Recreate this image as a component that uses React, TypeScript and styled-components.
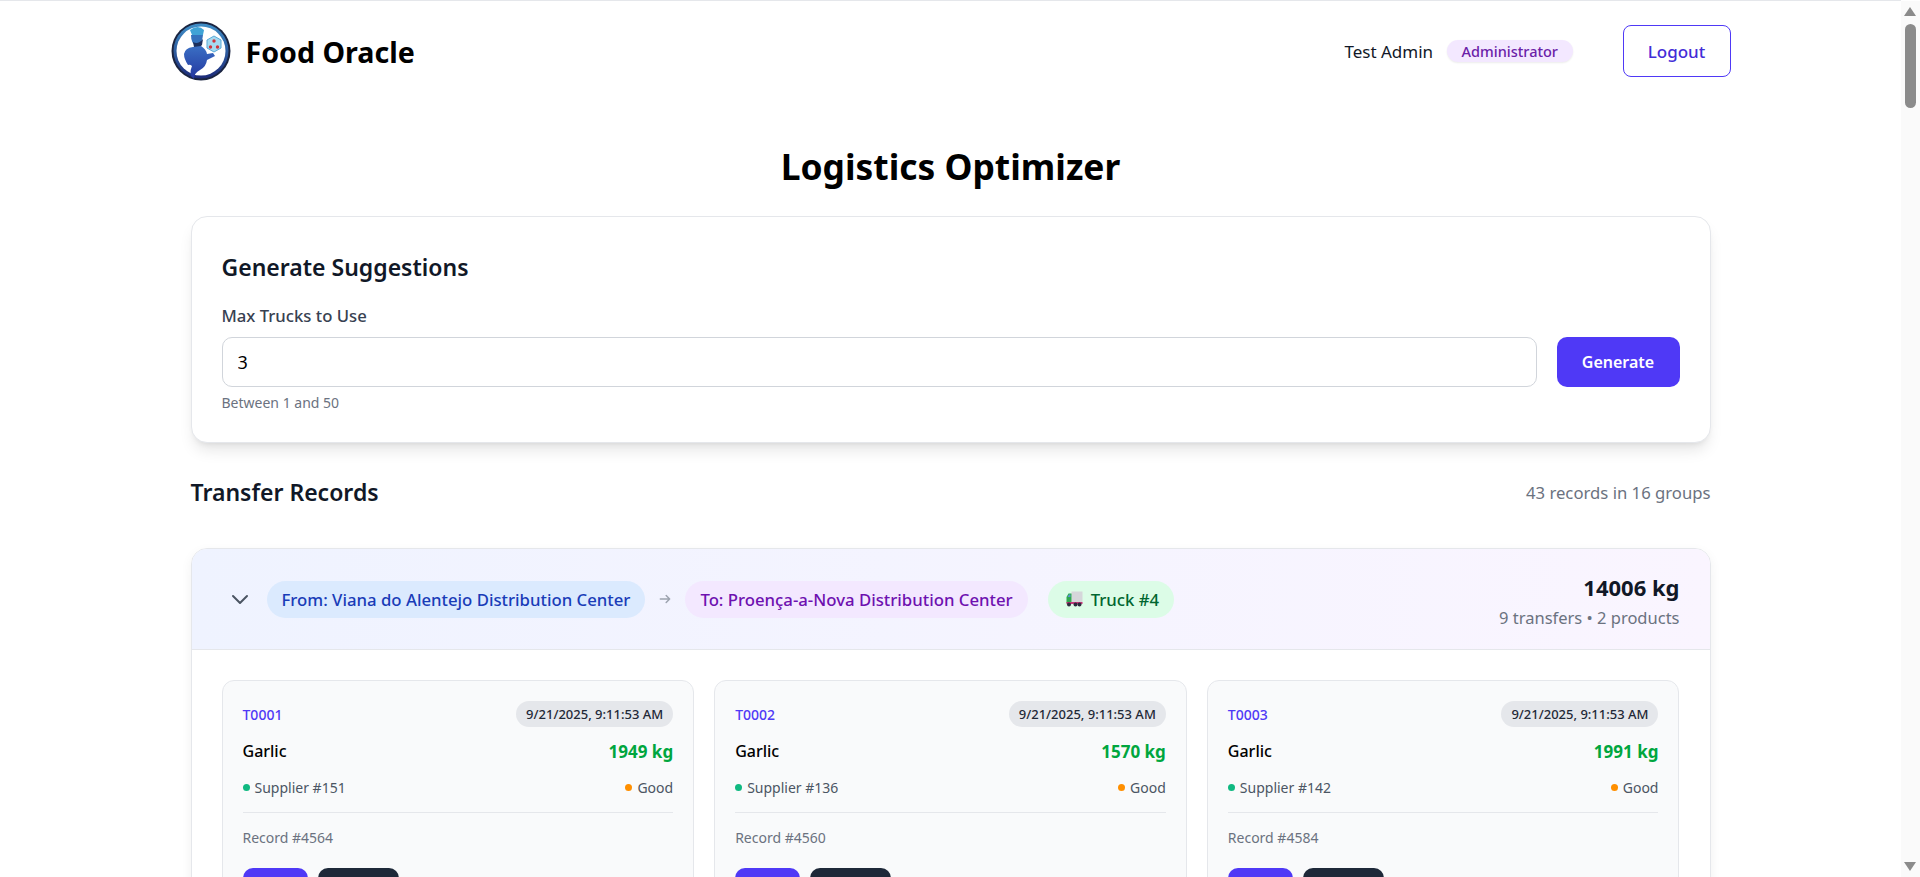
import React from "react";
import styled, { createGlobalStyle } from "styled-components";

const GlobalStyle = createGlobalStyle`
  html, body {
    margin: 0;
    padding: 0;
    background: #fff;
    font-family: "Noto Sans", "Open Sans", sans-serif;
  }
  * { box-sizing: border-box; }
`;

const Page = styled.div`
  width: 1901px;
  border-top: 1px solid #e5e7eb;
  min-height: 1300px;
`;

const ScrollTrack = styled.div`
  position: fixed;
  top: 1px;
  right: 0;
  bottom: 0;
  width: 19px;
  background: #fafafa;
`;

const ScrollThumb = styled.div`
  position: absolute;
  top: 23px;
  left: 4px;
  width: 11px;
  height: 84px;
  border-radius: 6px;
  background: #8b8b8b;
`;

const ScrollArrow = styled.i<{ $down?: boolean }>`
  position: absolute;
  left: 3px;
  ${(p) => (p.$down ? "bottom: 6px;" : "top: 6px;")}
  width: 0;
  height: 0;
  border-left: 6.5px solid transparent;
  border-right: 6.5px solid transparent;
  ${(p) => (p.$down ? "border-top: 9px solid #8b8b8b;" : "border-bottom: 9px solid #8b8b8b;")}
`;

const Navbar = styled.header`
  width: 1600px;
  margin: 0 auto;
  padding: 20px 20px 0;
  height: 103px;
  display: flex;
  justify-content: space-between;
  align-items: flex-start;
`;

const Brand = styled.div`
  display: flex;
  align-items: center;
  gap: 15px;
  height: 60px;
`;

const BrandName = styled.span`
  font-size: 28.6px;
  font-weight: 700;
  color: #000;
`;

const NavRight = styled.div`
  display: flex;
  align-items: center;
  height: 52px;
  margin-top: 4px;
`;

const UserName = styled.span`
  font-size: 17px;
  color: #111827;
  margin-right: 14px;
`;

const RoleBadge = styled.span`
  background: #f3e8ff;
  color: #6b21a8;
  font-size: 14.5px;
  font-weight: 500;
  height: 22px;
  line-height: 22px;
  padding: 0 14.5px;
  border-radius: 11px;
  box-shadow: 0 1px 2px rgba(0, 0, 0, 0.08);
  margin-right: 50px;
`;

const LogoutButton = styled.button`
  width: 108px;
  height: 52px;
  background: #fff;
  border: 1px solid #4f39f6;
  border-radius: 8px;
  color: #432dd7;
  font: 500 17px "Noto Sans", sans-serif;
`;

const Main = styled.main`
  width: 1520px;
  margin: 0 auto;
`;

const PageTitle = styled.h1`
  margin: 31px 0 19px;
  font-size: 35.4px;
  line-height: 62px;
  font-weight: 700;
  color: #000;
  text-align: center;
`;

const Panel = styled.section`
  background: #fff;
  border: 1px solid #e5e7eb;
  border-radius: 16px;
  box-shadow: 0 10px 15px -3px rgba(0, 0, 0, 0.1), 0 4px 6px -4px rgba(0, 0, 0, 0.1);
  padding: 30px;
  height: 227px;
`;

const PanelTitle = styled.h2`
  margin: 0;
  font-size: 23px;
  line-height: 40px;
  font-weight: 600;
  color: #111827;
`;

const FieldLabel = styled.label`
  display: block;
  margin-top: 17px;
  font-size: 16.7px;
  line-height: 24px;
  font-weight: 500;
  color: #374151;
`;

const FieldRow = styled.div`
  display: flex;
  gap: 20px;
  margin-top: 9px;
`;

const NumberInput = styled.input`
  flex: 1;
  height: 50px;
  padding: 0 15px;
  border: 1px solid #d1d5db;
  border-radius: 10px;
  font: 400 18px "Noto Sans", sans-serif;
  color: #000;
`;

const GenerateButton = styled.button`
  width: 123px;
  height: 50px;
  border: none;
  border-radius: 10px;
  background: #4f39f6;
  color: #fff;
  font: 600 16px "Noto Sans", sans-serif;
`;

const Hint = styled.p`
  margin: 6px 0 0;
  font-size: 14px;
  line-height: 20px;
  color: #6b7280;
`;

const SectionHead = styled.div`
  display: flex;
  justify-content: space-between;
  align-items: center;
  height: 48px;
  margin: 25px 0 32px;
`;

const SectionTitle = styled.h2`
  margin: 0;
  font-size: 23px;
  font-weight: 600;
  color: #111827;
`;

const SectionMeta = styled.span`
  font-size: 16.7px;
  color: #6b7280;
`;

const Group = styled.section`
  border: 1px solid #e5e7eb;
  border-radius: 16px;
  box-shadow: 0 4px 12px rgba(0, 0, 0, 0.06);
  overflow: hidden;
`;

const GroupHead = styled.div`
  height: 101px;
  padding: 0 30px;
  display: flex;
  align-items: center;
  background: linear-gradient(to right, #eff3ff, #faf5ff);
  border-bottom: 1px solid #e5e7eb;
`;

const Chevron = styled.svg`
  width: 24px;
  height: 24px;
  margin: 0 15px 0 6px;
  color: #4b5563;
`;

const Pill = styled.span<{ $tone: "blue" | "purple" | "green" }>`
  height: 37px;
  line-height: 37px;
  padding: 0 15px;
  border-radius: 19px;
  font-size: 16.75px;
  font-weight: 500;
  white-space: nowrap;
  background: ${(p) => ({ blue: "#dbeafe", purple: "#f3e8ff", green: "#dcfce7" })[p.$tone]};
  color: ${(p) => ({ blue: "#193cb8", purple: "#6e11b0", green: "#016630" })[p.$tone]};
`;

const Arrow = styled.svg`
  width: 14px;
  height: 14px;
  margin: 0 13px;
  color: #9ca3af;
`;

const TruckPill = styled(Pill)`
  margin-left: 20px;
  padding: 0 15px 0 18px;
  display: inline-flex;
  align-items: center;
  gap: 8px;
`;

const GroupTotals = styled.div`
  margin-left: auto;
  text-align: right;
  padding-top: 6px;
`;

const TotalWeight = styled.div`
  font-size: 22px;
  line-height: 32px;
  font-weight: 700;
  color: #111827;
`;

const TotalMeta = styled.div`
  font-size: 16.5px;
  line-height: 30px;
  color: #6b7280;
`;

const CardGrid = styled.div`
  padding: 30px;
  display: grid;
  grid-template-columns: repeat(3, 1fr);
  gap: 20px;
  background: #fff;
`;

const Card = styled.article`
  background: #f9fafb;
  border: 1px solid #e5e7eb;
  border-radius: 12px;
  padding: 20px;
`;

const Row = styled.div`
  display: flex;
  justify-content: space-between;
  align-items: center;
`;

const TransferId = styled.span`
  font-size: 14px;
  font-weight: 500;
  color: #4f39f6;
`;

const DateChip = styled.span`
  background: #e5e7eb;
  color: #1f2937;
  font-size: 13px;
  font-weight: 500;
  height: 26px;
  line-height: 26px;
  padding: 0 10px;
  border-radius: 13px;
`;

const ProductRow = styled(Row)`
  margin-top: 9px;
  height: 30px;
`;

const ProductName = styled.span`
  font-size: 16px;
  font-weight: 500;
  color: #000;
`;

const Quantity = styled.span`
  font-size: 17px;
  font-weight: 700;
  color: #00a63e;
`;

const MetaRow = styled(Row)`
  margin-top: 7px;
  height: 28px;
  font-size: 14px;
  color: #4b5563;
`;

const Dot = styled.i<{ $color: string }>`
  display: inline-block;
  width: 7px;
  height: 7px;
  border-radius: 50%;
  margin-right: 5px;
  vertical-align: 2px;
  background: ${(p) => p.$color};
`;

const CardFooter = styled.div`
  margin-top: 11px;
  border-top: 1px solid #e5e7eb;
  padding-top: 13px;
  font-size: 14px;
  line-height: 24px;
  color: #6b7280;
`;

const CardActions = styled.div`
  display: flex;
  gap: 10px;
  margin-top: 18px;
`;

const ActionButton = styled.button<{ $dark?: boolean }>`
  height: 36px;
  width: ${(p) => (p.$dark ? "81px" : "65px")};
  border: none;
  border-radius: 10px;
  color: #fff;
  font: 500 14px "Noto Sans", sans-serif;
  background: ${(p) => (p.$dark ? "#1e2939" : "#4f39f6")};
`;

const transfers = [
  { id: "T0001", kg: 1949, supplier: 151, record: 4564 },
  { id: "T0002", kg: 1570, supplier: 136, record: 4560 },
  { id: "T0003", kg: 1991, supplier: 142, record: 4584 },
];

function Logo() {
  return (
    <svg width="60" height="60" viewBox="0 0 60 60">
      <defs>
        <linearGradient id="genie" x1="0" y1="0" x2="0" y2="1">
          <stop offset="0" stopColor="#3a6fc4" />
          <stop offset="1" stopColor="#23369f" />
        </linearGradient>
        <linearGradient id="ring" x1="0" y1="0" x2="0" y2="1">
          <stop offset="0" stopColor="#3f8fc8" />
          <stop offset="1" stopColor="#1c2a78" />
        </linearGradient>
      </defs>
      <circle cx="30" cy="30" r="29.5" fill="#1a2440" />
      <circle cx="30" cy="30" r="27.5" fill="url(#ring)" />
      <circle cx="30" cy="30" r="24.5" fill="#fff" />
      <path d="M19 9 Q27 3 33 9 L32 14 L21 14 Z" fill="#3fa3d6" />
      <path d="M20 14 Q20 22 25 25 Q31 25 32 14 Z" fill="#3472bd" />
      <path d="M22 21 Q27 24 32 18 L31 24 Q27 29 23 26 Z" fill="#1d2f5c" />
      <path d="M13 33 Q14 27 22 26 L30 25 Q35 28 36 33 L42 32 L44 35 L36 39 Q35 46 29 49 Q23 52 23 58 Q17 54 21 45 Q19 43 17 44 Q13 38 13 33 Z" fill="url(#genie)" />
      <path d="M36 19 L43 15 L50 19 L50 27 L43 31 L36 27 Z" fill="#a5daf0" stroke="#5aa9d8" strokeWidth="1" />
      <circle cx="43" cy="20" r="1.7" fill="#d0343c" />
      <circle cx="39.5" cy="26" r="1.7" fill="#d0343c" />
      <circle cx="46.5" cy="26" r="1.7" fill="#d0343c" />
    </svg>
  );
}

function TruckIcon() {
  return (
    <svg width="17" height="16" viewBox="0 0 17 16">
      <rect x="5.5" y="0.5" width="11" height="11" fill="#d5d6da" />
      <path d="M0.5 12 V6 L2.5 2.5 H5.5 V12 Z" fill="#2fa84f" />
      <path d="M1.5 6 L3 3.5 H4.5 V6 Z" fill="#5b8fd6" />
      <rect x="0.5" y="11" width="16" height="2" fill="#c2397a" />
      <circle cx="3" cy="13.5" r="2" fill="#2d2a3e" />
      <circle cx="9.5" cy="13.5" r="2" fill="#2d2a3e" />
      <circle cx="13.5" cy="13.5" r="2" fill="#2d2a3e" />
    </svg>
  );
}

export default function App() {
  return (
    <>
      <GlobalStyle />
      <Page>
        <Navbar>
          <Brand>
            <Logo />
            <BrandName>Food Oracle</BrandName>
          </Brand>
          <NavRight>
            <UserName>Test Admin</UserName>
            <RoleBadge>Administrator</RoleBadge>
            <LogoutButton>Logout</LogoutButton>
          </NavRight>
        </Navbar>
        <Main>
          <PageTitle>Logistics Optimizer</PageTitle>
          <Panel>
            <PanelTitle>Generate Suggestions</PanelTitle>
            <FieldLabel>Max Trucks to Use</FieldLabel>
            <FieldRow>
              <NumberInput defaultValue="3" />
              <GenerateButton>Generate</GenerateButton>
            </FieldRow>
            <Hint>Between 1 and 50</Hint>
          </Panel>
          <SectionHead>
            <SectionTitle>Transfer Records</SectionTitle>
            <SectionMeta>43 records in 16 groups</SectionMeta>
          </SectionHead>
          <Group>
            <GroupHead>
              <Chevron viewBox="0 0 24 24" fill="none" stroke="currentColor" strokeWidth="2" strokeLinecap="round" strokeLinejoin="round">
                <path d="M5 9l7 7 7-7" />
              </Chevron>
              <Pill $tone="blue">From: Viana do Alentejo Distribution Center</Pill>
              <Arrow viewBox="0 0 24 24" fill="none" stroke="currentColor" strokeWidth="2.5" strokeLinecap="round" strokeLinejoin="round">
                <path d="M4 12h16M14 6l6 6-6 6" />
              </Arrow>
              <Pill $tone="purple">To: Proença-a-Nova Distribution Center</Pill>
              <TruckPill $tone="green"><TruckIcon />Truck #4</TruckPill>
              <GroupTotals>
                <TotalWeight>14006 kg</TotalWeight>
                <TotalMeta>9 transfers • 2 products</TotalMeta>
              </GroupTotals>
            </GroupHead>
            <CardGrid>
              {transfers.map((t) => (
                <Card key={t.id}>
                  <Row>
                    <TransferId>{t.id}</TransferId>
                    <DateChip>9/21/2025, 9:11:53 AM</DateChip>
                  </Row>
                  <ProductRow>
                    <ProductName>Garlic</ProductName>
                    <Quantity>{t.kg} kg</Quantity>
                  </ProductRow>
                  <MetaRow>
                    <span><Dot $color="#10b981" />Supplier #{t.supplier}</span>
                    <span><Dot $color="#ff8f00" />Good</span>
                  </MetaRow>
                  <CardFooter>
                    Record #{t.record}
                    <CardActions>
                      <ActionButton>Edit</ActionButton>
                      <ActionButton $dark>Delete</ActionButton>
                    </CardActions>
                  </CardFooter>
                </Card>
              ))}
            </CardGrid>
          </Group>
        </Main>
      </Page>
      <ScrollTrack>
        <ScrollArrow />
        <ScrollThumb />
        <ScrollArrow $down />
      </ScrollTrack>
    </>
  );
}
